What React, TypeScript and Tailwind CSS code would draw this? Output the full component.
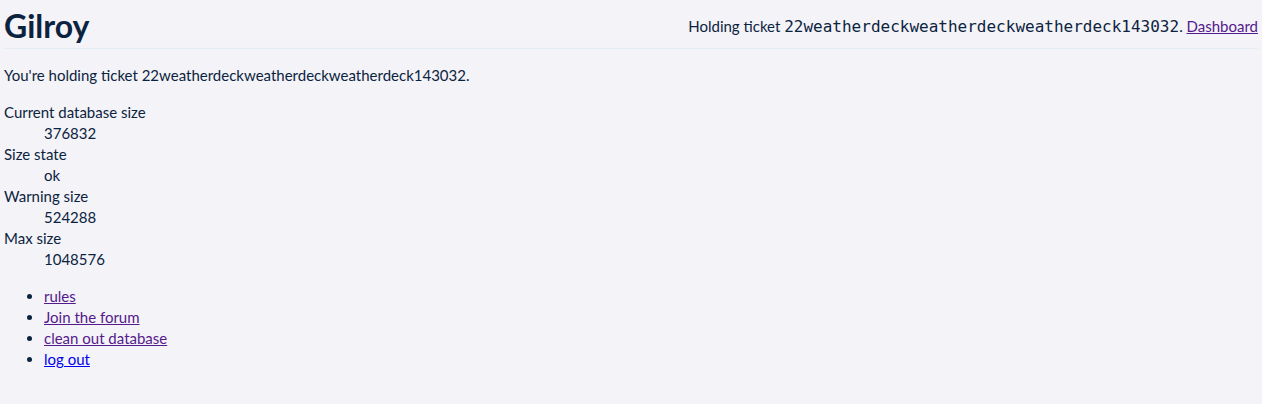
const ticket = '22weatherdeckweatherdeckweatherdeck143032';

const stats: [string, string][] = [
  ['Current database size', '376832'],
  ['Size state', 'ok'],
  ['Warning size', '524288'],
  ['Max size', '1048576'],
];

const links = [
  { label: 'rules', visited: true },
  { label: 'Join the forum', visited: true },
  { label: 'clean out database', visited: true },
  { label: 'log out', visited: false },
];

export default function App() {
  return (
    <div className="min-h-[404px] bg-[#f3f3f8] px-1 font-['Lato',sans-serif] text-[15px] leading-[21px] text-[#0c2340]">
      <header className="flex h-[49px] items-center justify-between border-b border-[#e6ecf3]">
        <h1 className="pt-[3px] text-[32px] font-bold leading-[36px]">Gilroy</h1>
        <div className="pt-[5px]">
          Holding ticket{' '}
          <code className="font-['DejaVu_Sans_Mono',monospace] text-[16px]">{ticket}</code>.{' '}
          <a href="#" className="text-[#551a8b] underline">
            Dashboard
          </a>
        </div>
      </header>

      <p className="mt-4">You're holding ticket {ticket}.</p>

      <dl className="mt-4">
        {stats.map(([k, v]) => (
          <div key={k}>
            <dt>{k}</dt>
            <dd className="ml-10">{v}</dd>
          </div>
        ))}
      </dl>

      <ul className="mt-4 list-disc pl-10">
        {links.map((l) => (
          <li key={l.label}>
            <a href="#" className={l.visited ? 'text-[#551a8b] underline' : 'text-[#0000ee] underline'}>
              {l.label}
            </a>
          </li>
        ))}
      </ul>
    </div>
  );
}
